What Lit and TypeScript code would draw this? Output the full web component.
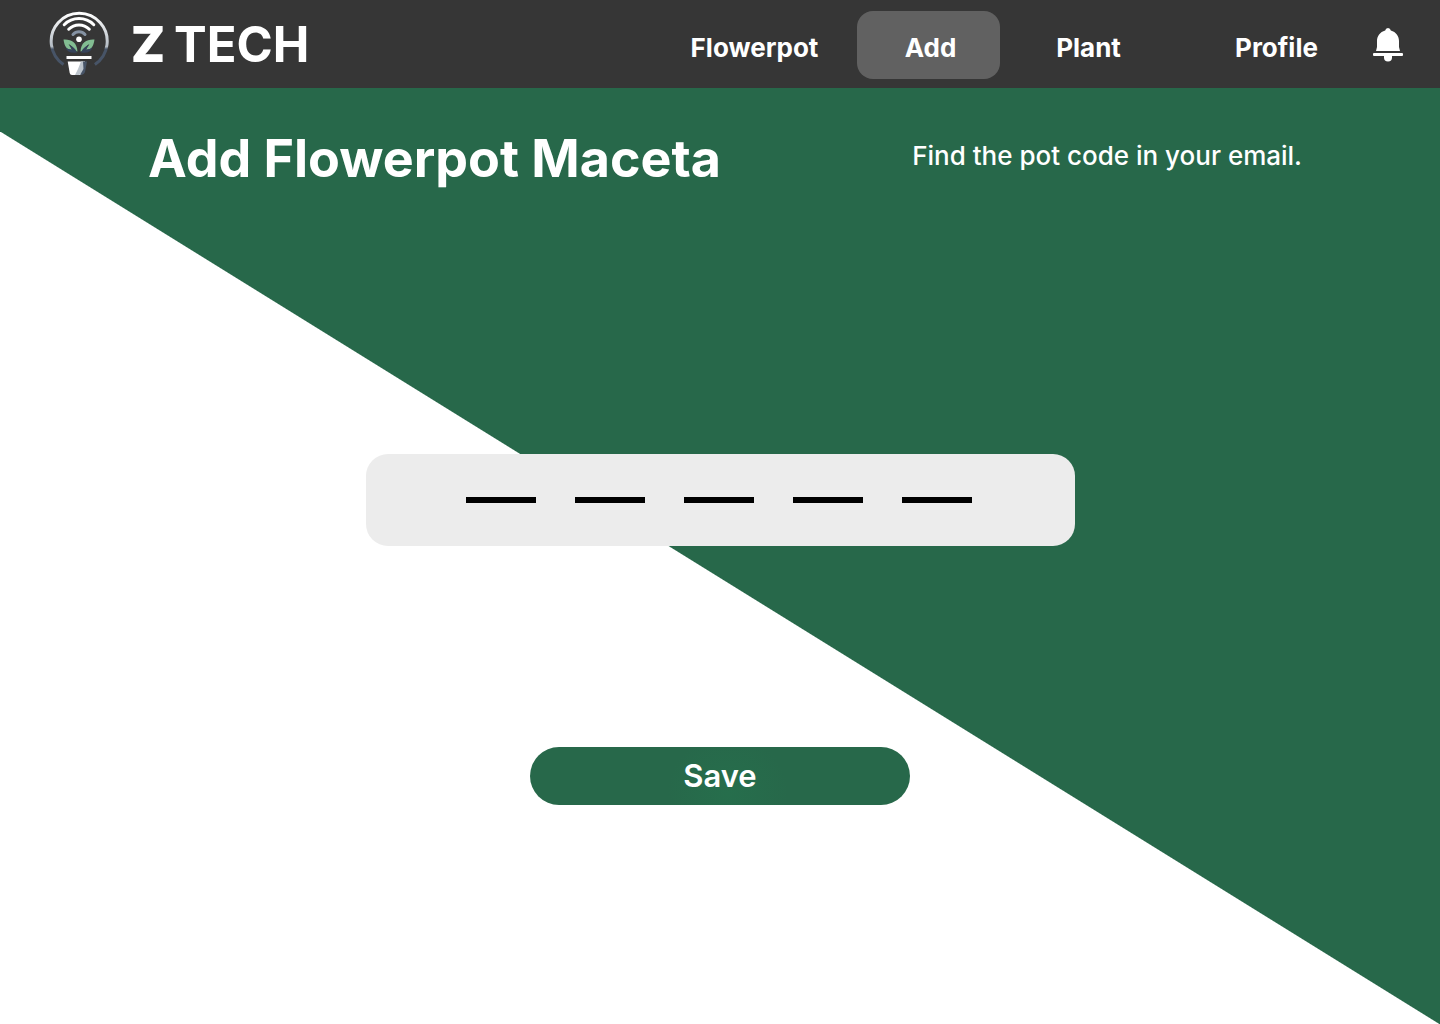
import { LitElement, html, css } from "lit";
import { customElement, state } from "lit/decorators.js";

@customElement("brand-logo")
class BrandLogo extends LitElement {
  static styles = css`
    :host {
      display: block;
    }
    .brand {
      display: flex;
      align-items: center;
      color: #fff;
      text-decoration: none;
      line-height: 60px;
      font-size: 49px;
      font-weight: 700;
    }
    .mark {
      width: 60px;
      height: 66px;
      margin-right: 22px;
      flex: none;
    }
    .word {
      padding-top: 2px;
    }
    .initial {
      font-weight: 900;
      margin-right: 9px;
    }
  `;

  render() {
    return html`
      <a class="brand" href="#home" aria-label="Z TECH">
        <svg class="mark" viewBox="0 0 60 66" fill="none" aria-hidden="true">
          <defs>
            <linearGradient id="ring" x1="0" y1="0" x2="0" y2="1">
              <stop offset="0" stop-color="#fff" />
              <stop offset="0.65" stop-color="#b4bcc4" />
              <stop offset="0.7" stop-color="#475467" />
              <stop offset="1" stop-color="#475467" />
            </linearGradient>
          </defs>
          <path d="M14.500 53.500A28 28 0 1 1 45.900 53.500" stroke="url(#ring)" stroke-width="3" />
          <g stroke-linecap="round" stroke-width="3">
            <path d="M15.200 13.700A21 21 0 0 1 44.800 13.700" stroke="#fff" />
            <path d="M19.700 18.200A14.500 14.500 0 0 1 40.300 18.200" stroke="#fff" />
            <path d="M24 23.500A8 8 0 0 1 36 23.500" stroke="#8592a3" />
          </g>
          <circle cx="30" cy="28.300" r="2.800" fill="#fff" />
          <path d="M14.500 28.500C22 28 28 31 28.500 40.500L26 40C24 36 22 34 19.500 33Q22 36 23 39C18 39 15.500 36 14.500 28.500Z" fill="#82bd92" />
          <path d="M45.500 28.500C38 28 32 31 31.500 40.500L34 40C36 36 38 34 40.500 33Q38 36 37 39C42 39 44.500 36 45.500 28.500Z" fill="#82bd92" />
          <path d="M16.500 36.500Q19 38.500 23 38.500L20 34Q26 36 28 41.500Q19 43 16.500 36.500Z" fill="#36435a" />
          <path d="M43.500 36.500Q41 38.500 37 38.500L40 34Q34 36 32 41.500Q41 43 43.500 36.500Z" fill="#36435a" />
          <rect x="17.500" y="45" width="25" height="3" fill="#fff" />
          <path d="M18.700 50.500H36L32 64H23Q21 64 20.700 62Z" fill="#fff" />
          <path d="M32 50.500H36L34.500 61L30 64H26L29 58Z" fill="#bcc4cc" />
          <path d="M34 50.500H38L36 61Q35 64 31 64L34.500 58Z" fill="#475467" />
        </svg>
        <span class="word initial">Z</span><span class="word">TECH</span>
      </a>
    `;
  }
}

@customElement("app-root")
class AppRoot extends LitElement {
  static styles = css`
    :host {
      display: flex;
      flex-direction: column;
      min-height: 100vh;
      font-family: Inter, "Liberation Sans", sans-serif;
      color: #fff;
    }
    * {
      box-sizing: border-box;
    }
    .bar {
      display: flex;
      align-items: center;
      justify-content: space-between;
      height: 88px;
      padding: 0 37px 0 49px;
      background: #363636;
    }
    .nav {
      display: flex;
      align-items: center;
      padding-top: 2px;
    }
    .link {
      display: flex;
      align-items: center;
      justify-content: center;
      width: 143px;
      height: 68px;
      padding: 6px 0 0 4px;
      border-radius: 16px;
      color: #fff;
      font-size: 26px;
      font-weight: 700;
      line-height: 30px;
      text-decoration: none;
      margin-right: 15px;
    }
    .link.spaced {
      margin-right: 33px;
    }
    .link.wide {
      margin-right: 45px;
    }
    .link.last {
      margin-right: 27px;
    }
    .link.active {
      background: #616161;
    }
    .bell {
      display: block;
      width: 30px;
      height: 34px;
      padding: 0;
      border: 0;
      background: none;
    }
    .bell svg {
      display: block;
    }
    .main {
      flex: 1;
      padding: 41px 48px 48px;
      background:
        linear-gradient(to top right, #fff 50%, #27684a calc(50% + 1px)) 0 44px / 100% calc(100% - 43px) no-repeat,
        #27684a;
    }
    .intro {
      display: flex;
      justify-content: space-between;
      padding: 0 90px 0 100px;
    }
    .title {
      margin: 0;
      font-size: 52px;
      line-height: 60px;
      font-weight: 700;
    }
    .hint {
      margin: 12px 0 0;
      font-size: 26px;
      line-height: 30px;
      font-weight: 500;
    }
    .form {
      display: flex;
      flex-direction: column;
      align-items: center;
      gap: 201px;
      margin-top: 265px;
    }
    .code {
      display: grid;
      grid-template-columns: repeat(5, 1fr);
      gap: 39px;
      width: 100%;
      max-width: 709px;
      min-width: 0;
      margin: 0;
      padding: 6px 102px 43px 100px;
      border: 0;
      border-radius: 22px;
      background: #ececec;
    }
    .digit {
      width: 100%;
      min-width: 0;
      height: 43px;
      padding: 0;
      border: 0;
      border-bottom: 6px solid #000;
      border-radius: 0;
      background: none;
      color: #000;
      font: 600 28px/34px Inter, sans-serif;
      text-align: center;
      outline: none;
    }
    .save {
      width: 100%;
      max-width: 380px;
      height: 58px;
      border: 0;
      border-radius: 29px;
      background: radial-gradient(circle at 52% 80%, #266e4c, #27684a 60px);
      color: #fff;
      font: 600 31px/40px Inter, sans-serif;
    }
  `;

  @state() private active = "Add";

  private links = [
    { label: "Flowerpot", gap: "spaced" },
    { label: "Add", gap: "" },
    { label: "Plant", gap: "wide" },
    { label: "Profile", gap: "last" },
  ];

  private advance(e: Event) {
    const input = e.target as HTMLInputElement;
    const next = input.nextElementSibling as HTMLInputElement | null;
    if (input.value && next) next.focus();
  }

  render() {
    return html`
      <header class="bar">
        <brand-logo></brand-logo>
        <nav class="nav">
          ${this.links.map(
            (l) => html`<a
              class="link ${l.gap} ${l.label === this.active ? "active" : ""}"
              href="#${l.label.toLowerCase()}"
              @click=${() => (this.active = l.label)}
              >${l.label}</a
            >`
          )}
          <button class="bell" aria-label="Notifications">
            <svg width="30" height="34" viewBox="0 0 30 34" fill="#fff" aria-hidden="true">
              <path d="M15 0a3 3 0 0 1 2.800 2.500C23 4 26 8 26 13v6l1 4H3l1-4v-6C4 8 7 4 12.200 2.500A3 3 0 0 1 15 0Z" />
              <rect y="25" width="30" height="3" rx="1" />
              <path d="M11 28h8v1.500a4 4 0 0 1-8 0Z" />
            </svg>
          </button>
        </nav>
      </header>
      <main class="main">
        <div class="intro">
          <h1 class="title">Add Flowerpot Maceta</h1>
          <p class="hint">Find the pot code in your email.</p>
        </div>
        <form class="form" @submit=${(e: Event) => e.preventDefault()}>
          <fieldset class="code" aria-label="Pot code">
            ${[1, 2, 3, 4, 5].map(
              (n) => html`<input class="digit" maxlength="1" aria-label="Character ${n}" @input=${this.advance} />`
            )}
          </fieldset>
          <button class="save" type="submit">Save</button>
        </form>
      </main>
    `;
  }
}
